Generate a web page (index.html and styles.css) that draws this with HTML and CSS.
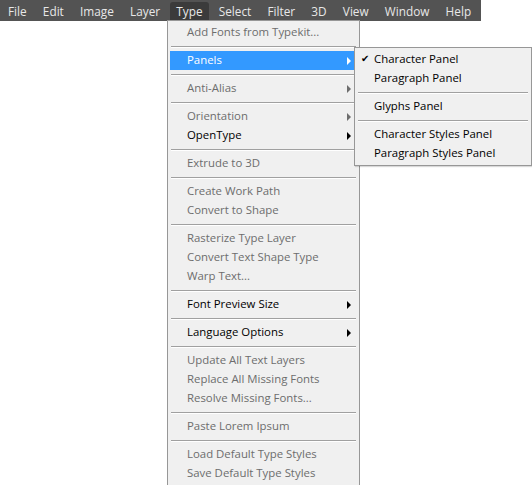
FILE: index.html
```html
<!DOCTYPE html>
<html>
<head>
<meta charset="utf-8">
<link rel="stylesheet" href="styles.css">
</head>
<body>
<div class="menubar">
  <span class="mb-item">File</span>
  <span class="mb-item">Edit</span>
  <span class="mb-item">Image</span>
  <span class="mb-item">Layer</span>
  <span class="mb-item active">Type</span>
  <span class="mb-item">Select</span>
  <span class="mb-item">Filter</span>
  <span class="mb-item">3D</span>
  <span class="mb-item">View</span>
  <span class="mb-item">Window</span>
  <span class="mb-item">Help</span>
</div>

<div class="menu main-menu">
  <div class="item disabled">Add Fonts from Typekit...</div>
  <div class="sep"></div>
  <div class="item hl sub">Panels</div>
  <div class="sep"></div>
  <div class="item disabled sub">Anti-Alias</div>
  <div class="sep"></div>
  <div class="item disabled sub">Orientation</div>
  <div class="item sub">OpenType</div>
  <div class="sep"></div>
  <div class="item disabled">Extrude to 3D</div>
  <div class="sep"></div>
  <div class="item disabled">Create Work Path</div>
  <div class="item disabled">Convert to Shape</div>
  <div class="sep"></div>
  <div class="item disabled">Rasterize Type Layer</div>
  <div class="item disabled">Convert Text Shape Type</div>
  <div class="item disabled">Warp Text...</div>
  <div class="sep"></div>
  <div class="item sub">Font Preview Size</div>
  <div class="sep"></div>
  <div class="item sub">Language Options</div>
  <div class="sep"></div>
  <div class="item disabled">Update All Text Layers</div>
  <div class="item disabled">Replace All Missing Fonts</div>
  <div class="item disabled">Resolve Missing Fonts...</div>
  <div class="sep"></div>
  <div class="item disabled">Paste Lorem Ipsum</div>
  <div class="sep"></div>
  <div class="item disabled">Load Default Type Styles</div>
  <div class="item disabled">Save Default Type Styles</div>
</div>

<div class="menu sub-menu">
  <div class="item checked">Character Panel</div>
  <div class="item">Paragraph Panel</div>
  <div class="sep"></div>
  <div class="item">Glyphs Panel</div>
  <div class="sep"></div>
  <div class="item">Character Styles Panel</div>
  <div class="item">Paragraph Styles Panel</div>
</div>
</body>
</html>
```
FILE: styles.css
```css
html, body {
  margin: 0;
  padding: 0;
  background: #ffffff;
}
body {
  font-family: "Open Sans", "Noto Sans", "Liberation Sans", sans-serif;
  font-size: 11.4px;
  position: relative;
  width: 532px;
  height: 485px;
  overflow: hidden;
}
.menubar {
  width: 481px;
  height: 21px;
  background: #535353;
  display: flex;
  align-items: flex-end;
  padding-left: 0;
  box-sizing: border-box;
}
.mb-item {
  color: #e8e8e8;
  height: 19px;
  line-height: 18px;
  padding: 0 6px;
  margin: 0 2.1px;
  box-sizing: border-box;
  font-size: 11.8px;
}
.mb-item:first-child {
  margin-left: 2px;
}
.mb-item.active {
  background: #3b3b3b;
  border-radius: 3px 3px 0 0;
}
.menu {
  position: absolute;
  background: #f0f0f0;
  border: 1px solid #979797;
  padding: 2px;
  box-sizing: border-box;
}
.main-menu {
  left: 167px;
  top: 20px;
  width: 193px;
  height: 466px;
}
.sub-menu {
  left: 354px;
  top: 47px;
  width: 178px;
  height: 119px;
  box-shadow: 1px 1px 1px rgba(0,0,0,0.15);
}
.item {
  position: relative;
  height: 19px;
  line-height: 18px;
  padding-left: 17px;
  color: #000000;
  white-space: nowrap;
}
.item.disabled {
  color: #6d6d6d;
}
.item.hl {
  background: #3399ff;
  color: #ffffff;
}
.sep {
  height: 0;
  border-top: 1px solid #a0a0a0;
  border-bottom: 1px solid #ffffff;
  margin: 4px 1px 3px 1px;
}
.item.sub::after {
  content: "";
  position: absolute;
  right: 6px;
  top: 6px;
  border-left: 4px solid #000000;
  border-top: 4px solid transparent;
  border-bottom: 4px solid transparent;
}
.item.sub.disabled::after {
  border-left-color: #6d6d6d;
}
.item.sub.hl::after {
  border-left-color: #ffffff;
}
.item.checked::before {
  content: "\2714";
  position: absolute;
  left: 4px;
  top: 0;
  font-size: 10px;
  font-family: "DejaVu Sans", sans-serif;
  color: #000;
}
```
